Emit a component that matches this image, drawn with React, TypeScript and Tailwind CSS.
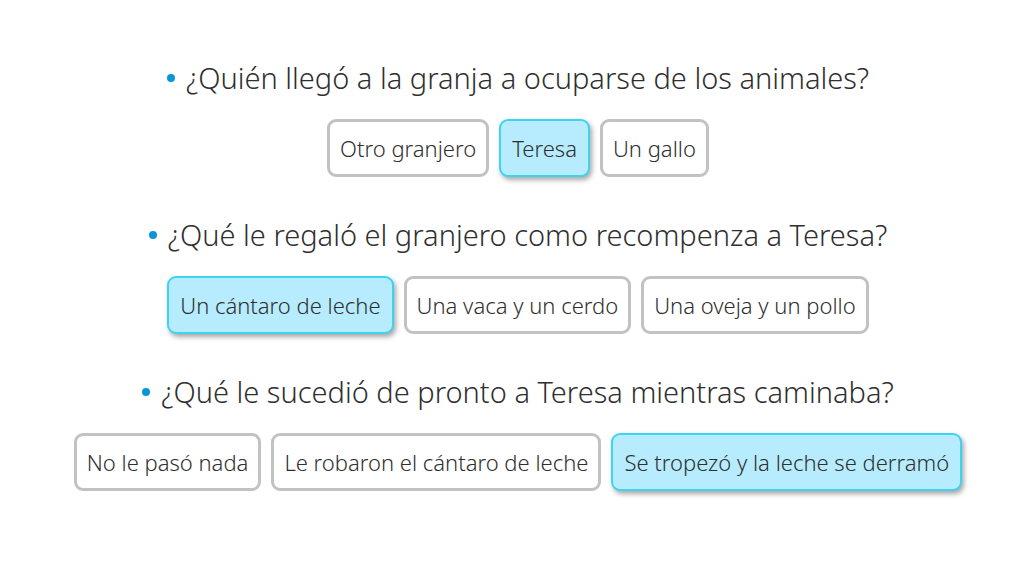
const questions = [
  {
    q: "¿Quién llegó a la granja a ocuparse de los animales?",
    options: ["Otro granjero", "Teresa", "Un gallo"],
    selected: 1,
  },
  {
    q: "¿Qué le regaló el granjero como recompenza a Teresa?",
    options: ["Un cántaro de leche", "Una vaca y un cerdo", "Una oveja y un pollo"],
    selected: 0,
  },
  {
    q: "¿Qué le sucedió de pronto a Teresa mientras caminaba?",
    options: ["No le pasó nada", "Le robaron el cántaro de leche", "Se tropezó y la leche se derramó"],
    selected: 2,
  },
]

export default function App() {
  return (
    <div
      className="w-[1036px] h-[565px] bg-white text-[#2f2f2f] flex flex-col items-center pt-[58px] gap-[38px]"
      style={{ fontFamily: '"Noto Sans", "Open Sans", sans-serif' }}
    >
      {questions.map((item, i) => (
        <div key={i} className="flex flex-col items-center gap-[21px]">
          <div className="flex items-center gap-[11px] text-[29px] leading-[40px] font-light">
            <span className="w-[8px] h-[8px] rounded-full bg-[#0b95d9]" />
            <span>{item.q}</span>
          </div>
          <div className="flex gap-[10px]">
            {item.options.map((opt, j) => (
              <button
                key={j}
                className={
                  j === item.selected
                    ? "h-[58px] px-[11px] rounded-[9px] border-2 border-[#3fd3f2] bg-[#b6ecfd] text-[22px] font-light shadow-[2px_3px_5px_rgba(0,0,0,0.35)]"
                    : "h-[58px] px-[10px] rounded-[9px] border-[3px] border-[#c2c2c2] bg-white text-[22px] font-light"
                }
              >
                {opt}
              </button>
            ))}
          </div>
        </div>
      ))}
    </div>
  )
}
